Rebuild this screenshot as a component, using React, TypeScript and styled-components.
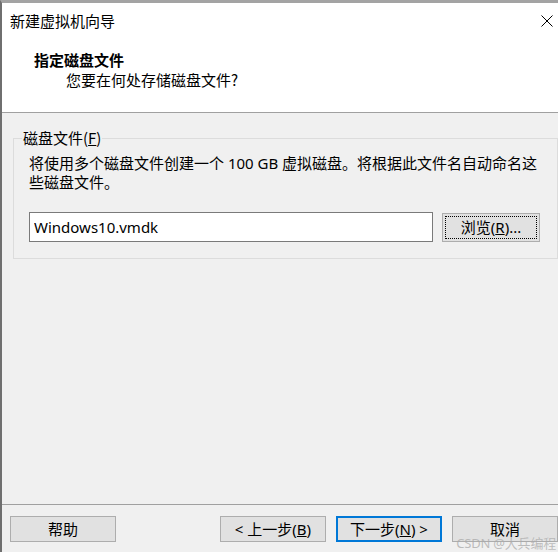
import React from "react";
import styled, { createGlobalStyle } from "styled-components";

const Global = createGlobalStyle`
  html, body {
    margin: 0;
    padding: 0;
    background: #f0f0f0;
  }
  * { box-sizing: border-box; }
`;

const FONT = `"Noto Sans", "Noto Sans CJK SC", sans-serif`;

const Window = styled.div`
  position: relative;
  width: 558px;
  height: 552px;
  display: flex;
  flex-direction: column;
  background: #f0f0f0;
  border-top: 3px solid #a3a3a3;
  border-left: 2px solid #6f6f6f;
  font-family: ${FONT};
  font-size: 15px;
  color: #000;
  overflow: hidden;
`;

const Header = styled.div`
  height: 110px;
  background: #fff;
  border-bottom: 1px solid #a0a0a0;
  padding-top: 8px;
  display: flex;
  flex-direction: column;
`;

const TitleRow = styled.div`
  display: flex;
  align-items: center;
  justify-content: space-between;
  height: 20px;
  padding-left: 8px;
  padding-right: 5px;
`;

const Title = styled.span`
  line-height: 20px;
  font-family: "Noto Sans CJK SC", sans-serif;
`;

const Close = styled.svg`
  width: 12px;
  height: 12px;
`;

const StepTitle = styled.div`
  margin-top: 19px;
  padding-left: 32px;
  line-height: 20px;
  font-weight: 700;
  font-family: "Noto Sans CJK SC", sans-serif;
`;

const StepSubtitle = styled.div`
  padding-left: 64px;
  line-height: 20px;
  font-family: "Noto Sans CJK SC", sans-serif;
`;

const Body = styled.div`
  flex: 1;
  display: flex;
  flex-direction: column;
`;

const Group = styled.fieldset`
  margin: 15px 0 0 11px;
  padding: 0 15px 16px 15px;
  border: 1px solid #dcdcdc;
  min-width: 0;
`;

const Legend = styled.legend`
  margin-left: -7px;
  padding: 0 1px;
  line-height: 20px;
  font-family: "Noto Sans CJK SC", sans-serif;
`;

const Description = styled.p`
  margin: 6px 0 0 0;
  line-height: 19px;
  white-space: nowrap;
`;

const InputRow = styled.div`
  display: flex;
  align-items: flex-end;
  gap: 9px;
  margin-top: 20px;
`;

const TextInput = styled.input`
  width: 404px;
  height: 30px;
  border: 1px solid #7a7a7a;
  background: #fff;
  padding: 0 4px;
  font-family: ${FONT};
  font-size: 15px;
  color: #000;
  outline: none;
`;

const Button = styled.button<{ $primary?: boolean; $focus?: boolean; $w?: number; $h?: number }>`
  width: ${(p) => p.$w ?? 106}px;
  height: ${(p) => p.$h ?? 26}px;
  padding: 0;
  background: #e1e1e1;
  border: ${(p) => (p.$primary ? "2px solid #0078d7" : "1px solid #adadad")};
  font-family: ${FONT};
  font-size: 15px;
  color: #000;
  line-height: 1;
  display: flex;
  align-items: center;
  justify-content: center;
  outline: ${(p) => (p.$focus ? "1px dotted #000" : "none")};
  outline-offset: -4px;
  cursor: default;
`;

const Footer = styled.div`
  display: flex;
  align-items: center;
  border-top: 1px solid #a0a0a0;
  padding: 11px 0 10px 8px;
`;

const Spacer = styled.div`
  flex: 1;
`;

const ButtonGroup = styled.div`
  display: flex;
  gap: 10px;
`;

const Watermark = styled.div`
  position: absolute;
  right: 2px;
  bottom: 1px;
  font-family: "Noto Sans", "Noto Sans CJK SC", sans-serif;
  font-size: 13px;
  line-height: 15px;
  color: rgba(170, 170, 170, 0.75);
  pointer-events: none;
  letter-spacing: -0.2px;
`;

export default function App() {
  return (
    <>
      <Global />
      <Window>
        <Header>
          <TitleRow>
            <Title>新建虚拟机向导</Title>
            <Close viewBox="0 0 12 12">
              <path d="M0.5 0.5 L11.5 11.5 M11.5 0.5 L0.5 11.5" stroke="#000" strokeWidth="1" fill="none" />
            </Close>
          </TitleRow>
          <StepTitle>指定磁盘文件</StepTitle>
          <StepSubtitle>您要在何处存储磁盘文件?</StepSubtitle>
        </Header>
        <Body>
          <Group>
            <Legend>
              磁盘文件(<u>F</u>)
            </Legend>
            <Description>
              将使用多个磁盘文件创建一个 100 GB 虚拟磁盘。将根据此文件名自动命名这
              <br />
              些磁盘文件。
            </Description>
            <InputRow>
              <TextInput defaultValue="Windows10.vmdk" />
              <Button $focus $w={98} $h={29}>
                浏览(<u>R</u>)...
              </Button>
            </InputRow>
          </Group>
        </Body>
        <Footer>
          <Button>帮助</Button>
          <Spacer />
          <ButtonGroup>
            <Button>
              &lt; 上一步(<u>B</u>)
            </Button>
            <Button $primary>
              下一步(<u>N</u>) &gt;
            </Button>
            <Button>取消</Button>
          </ButtonGroup>
        </Footer>
        <Watermark>CSDN @大兵编程</Watermark>
      </Window>
    </>
  );
}
